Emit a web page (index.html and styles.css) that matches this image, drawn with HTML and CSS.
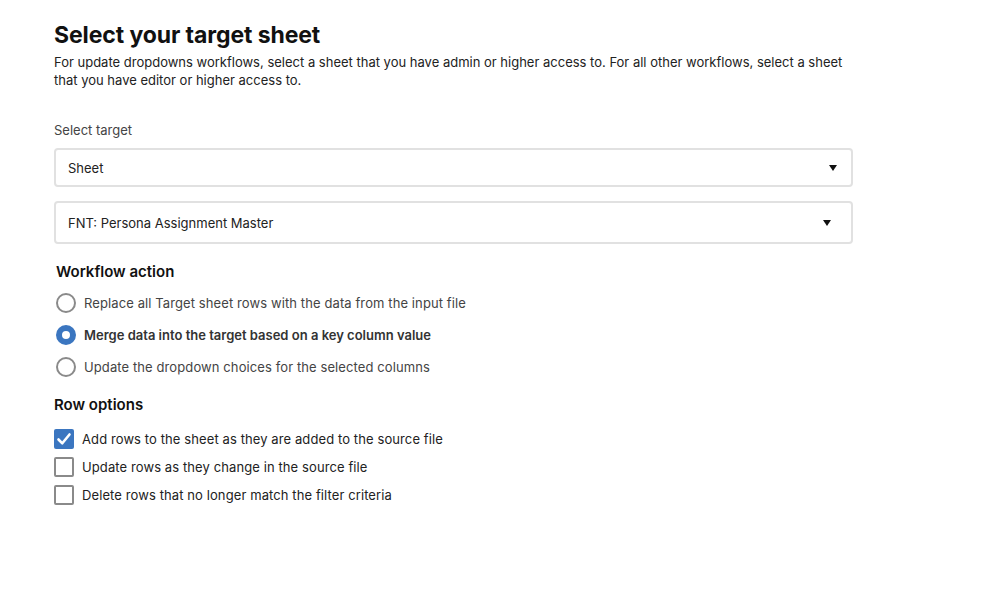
FILE: index.html
```html
<!DOCTYPE html>
<html lang="en">
<head>
<meta charset="utf-8">
<title>Select your target sheet</title>
<link rel="stylesheet" href="styles.css">
</head>
<body>
<main class="page">
  <h1 class="title">Select your target sheet</h1>
  <p class="intro">For update dropdowns workflows, select a sheet that you have admin or higher access to. For all other workflows, select a sheet that you have editor or higher access to.</p>

  <div class="field-label">Select target</div>
  <div class="select select-a">
    <span class="select-text">Sheet</span>
    <span class="caret"></span>
  </div>
  <div class="select select-b">
    <span class="select-text">FNT: Persona Assignment Master</span>
    <span class="caret"></span>
  </div>

  <h2 class="section-title section-indent">Workflow action</h2>
  <div class="radio-list">
    <div class="radio-row"><span class="radio"></span><span class="radio-label">Replace all Target sheet rows with the data from the input file</span></div>
    <div class="radio-row"><span class="radio radio-on"></span><span class="radio-label radio-label-on">Merge data into the target based on a key column value</span></div>
    <div class="radio-row"><span class="radio"></span><span class="radio-label">Update the dropdown choices for the selected columns</span></div>
  </div>

  <h2 class="section-title section-plain">Row options</h2>
  <div class="check-list">
    <div class="check-row"><span class="check check-on"><svg viewBox="0 0 20 20" width="20" height="20"><path d="M4.5 10.5 L8.3 14.3 L15.5 5.5" fill="none" stroke="#fff" stroke-width="2.6" stroke-linecap="round" stroke-linejoin="round"/></svg></span><span class="check-label">Add rows to the sheet as they are added to the source file</span></div>
    <div class="check-row"><span class="check"></span><span class="check-label">Update rows as they change in the source file</span></div>
    <div class="check-row"><span class="check"></span><span class="check-label">Delete rows that no longer match the filter criteria</span></div>
  </div>
</main>
</body>
</html>
```

FILE: styles.css
```css
html, body {
  margin: 0;
  padding: 0;
  background: #ffffff;
}

body {
  font-family: Inter, "Noto Sans", "Liberation Sans", sans-serif;
  color: #222;
}

.page {
  padding: 20px 0 0 54px;
  width: 799px;
}

.title {
  margin: 0;
  font-size: 23px;
  line-height: 30px;
  font-weight: 700;
  color: #111;
  letter-spacing: -0.1px;
}

.intro {
  margin: 3px 0 0;
  font-size: 13px;
  line-height: 18px;
  color: #222;
  width: 800px;
}

.field-label {
  margin-top: 32px;
  font-size: 13px;
  line-height: 18px;
  color: #444;
}

.select {
  box-sizing: border-box;
  display: flex;
  align-items: center;
  justify-content: space-between;
  border: 2px solid #e1e1e1;
  border-radius: 4px;
  font-size: 13px;
  color: #222;
}

.select-a {
  margin-top: 9px;
  height: 39px;
  padding: 0 14px 0 12px;
}

.select-b {
  margin-top: 14px;
  height: 43px;
  padding: 0 20px 0 12px;
}

.caret {
  width: 0;
  height: 0;
  border-left: 4px solid transparent;
  border-right: 4px solid transparent;
  border-top: 6px solid #111;
}

.section-title {
  margin: 0;
  font-size: 15px;
  line-height: 20px;
  font-weight: 600;
  color: #111;
}

.section-indent {
  margin-top: 18px;
  margin-left: 2px;
}

.section-plain {
  margin-top: 18px;
}

.radio-list {
  display: flex;
  flex-direction: column;
  gap: 12px;
  margin-top: 11px;
}

.radio-row {
  display: flex;
  align-items: center;
  height: 20px;
}

.radio {
  box-sizing: border-box;
  width: 20px;
  height: 20px;
  border-radius: 50%;
  border: 2px solid #8a8a8a;
  margin-left: 2px;
  margin-right: 8px;
  flex: none;
}

.radio-on {
  border: 6px solid #3b76c0;
  background: #fff;
}

.radio-label {
  font-size: 13px;
  color: #444;
  letter-spacing: 0.1px;
}

.radio-label-on {
  font-weight: 600;
  color: #333;
  letter-spacing: 0;
}

.check-list {
  display: flex;
  flex-direction: column;
  gap: 8px;
  margin-top: 14px;
}

.check-row {
  display: flex;
  align-items: center;
  height: 20px;
}

.check {
  box-sizing: border-box;
  width: 20px;
  height: 20px;
  border: 2px solid #8a8a8a;
  border-radius: 2px;
  margin-right: 8px;
  flex: none;
  display: flex;
}

.check-on {
  border: none;
  background: #3b76c0;
}

.check-label {
  font-size: 13px;
  color: #222;
  letter-spacing: 0.1px;
}
```
